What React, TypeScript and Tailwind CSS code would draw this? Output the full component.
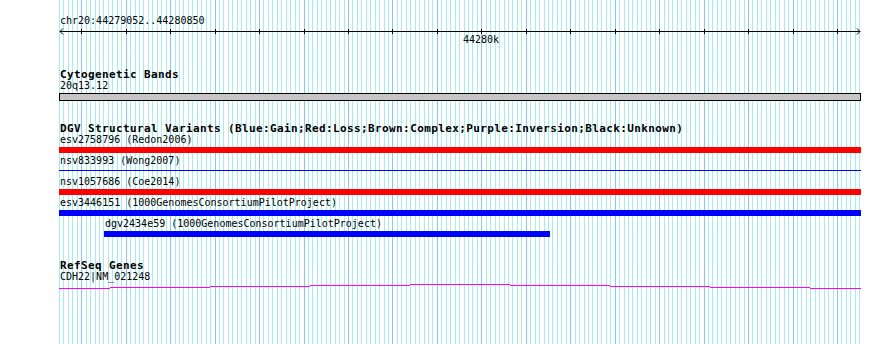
const GRID_X0 = 59.5;
const GRID_STEP = 4.4455;

const gridLines = Array.from({ length: 181 }, (_, j) => ({
  x: Math.floor(GRID_X0 + GRID_STEP * j),
  major: j % 10 === 5,
}));

// staircase intron line for the gene model: [x1, x2, y]
const geneSegments: [number, number, number][] = [
  [59, 110, 288],
  [110, 210, 287],
  [210, 310, 286],
  [310, 410, 285],
  [410, 510, 284],
  [510, 610, 285],
  [610, 710, 286],
  [710, 810, 287],
  [810, 861, 288],
];

function Label({ children, className = "" }: { children: React.ReactNode; className?: string }) {
  return (
    <div className={`h-[10px] pl-px text-[10px] leading-[10px] text-black whitespace-nowrap ${className}`}>
      {children}
    </div>
  );
}

function TrackTitle({ children, className = "" }: { children: React.ReactNode; className?: string }) {
  return (
    <div className={`h-[11px] pl-px text-[11px] leading-[11px] font-bold tracking-[0.38px] text-black whitespace-nowrap ${className}`}>
      {children}
    </div>
  );
}

function Ruler() {
  const ticks = gridLines.filter((l) => l.major);
  return (
    <svg width={802} height={9} className="block" shapeRendering="crispEdges">
      <line x1={1} y1={5.5} x2={801} y2={5.5} stroke="#000" strokeWidth={1} />
      <path d="M1 5.5 L4 2.5 M1 5.5 L4 8.5" stroke="#000" strokeWidth={1} fill="none" shapeRendering="auto" />
      <path d="M801 5.5 L798 2.5 M801 5.5 L798 8.5" stroke="#000" strokeWidth={1} fill="none" shapeRendering="auto" />
      {ticks.map((t) => (
        <line key={t.x} x1={t.x - 59 + 0.5} y1={3} x2={t.x - 59 + 0.5} y2={8} stroke="#000" strokeWidth={1} />
      ))}
    </svg>
  );
}

export default function App() {
  return (
    <div className="relative w-[890px] h-[344px] overflow-hidden bg-white font-['DejaVu_Sans_Mono',monospace]">
      <svg className="absolute inset-0" width={890} height={344} shapeRendering="crispEdges">
        {gridLines.map((l) => (
          <line
            key={l.x}
            x1={l.x + 0.5}
            y1={0}
            x2={l.x + 0.5}
            y2={344}
            stroke={l.major ? "#86c8f0" : "#a6eeee"}
            strokeWidth={1}
          />
        ))}
      </svg>

      <div className="relative ml-[59px] w-[802px] pt-[16px] flex flex-col">
        <Label>chr20:44279052..44280850</Label>
        <Ruler />
        <Label className="ml-[403px]">44280k</Label>

        <TrackTitle className="mt-[24px]">Cytogenetic Bands</TrackTitle>
        <Label className="mt-px">20q13.12</Label>
        <div className="mt-[2px] h-[8px] border border-black bg-[#c6c6c6]" />

        <TrackTitle className="mt-[22px]">
          DGV Structural Variants (Blue:Gain;Red:Loss;Brown:Complex;Purple:Inversion;Black:Unknown)
        </TrackTitle>
        <Label className="mt-px">esv2758796 (Redon2006)</Label>
        <div className="mt-[2px] h-[6px] bg-[#ff0000]" />
        <Label className="mt-[3px]">nsv833993 (Wong2007)</Label>
        <div className="mt-[4px] h-px bg-[#0000ff]" />
        <Label className="mt-[6px]">nsv1057686 (Coe2014)</Label>
        <div className="mt-[2px] h-[6px] bg-[#ff0000]" />
        <Label className="mt-[3px]">esv3446151 (1000GenomesConsortiumPilotProject)</Label>
        <div className="mt-[2px] h-[6px] bg-[#0000ff]" />
        <Label className="mt-[3px] ml-[45px]">dgv2434e59 (1000GenomesConsortiumPilotProject)</Label>
        <div className="mt-[2px] ml-[45px] w-[446px] h-[6px] bg-[#0000ff]" />

        <TrackTitle className="mt-[23px]">RefSeq Genes</TrackTitle>
        <Label className="mt-px">CDH22|NM_021248</Label>
        <svg width={802} height={6} className="mt-px block" shapeRendering="crispEdges">
          {geneSegments.map(([x1, x2, y]) => (
            <rect key={x1} x={x1 - 59} y={y - 283} width={x2 - x1} height={1} fill="#ff00ff" />
          ))}
        </svg>
      </div>
    </div>
  );
}
